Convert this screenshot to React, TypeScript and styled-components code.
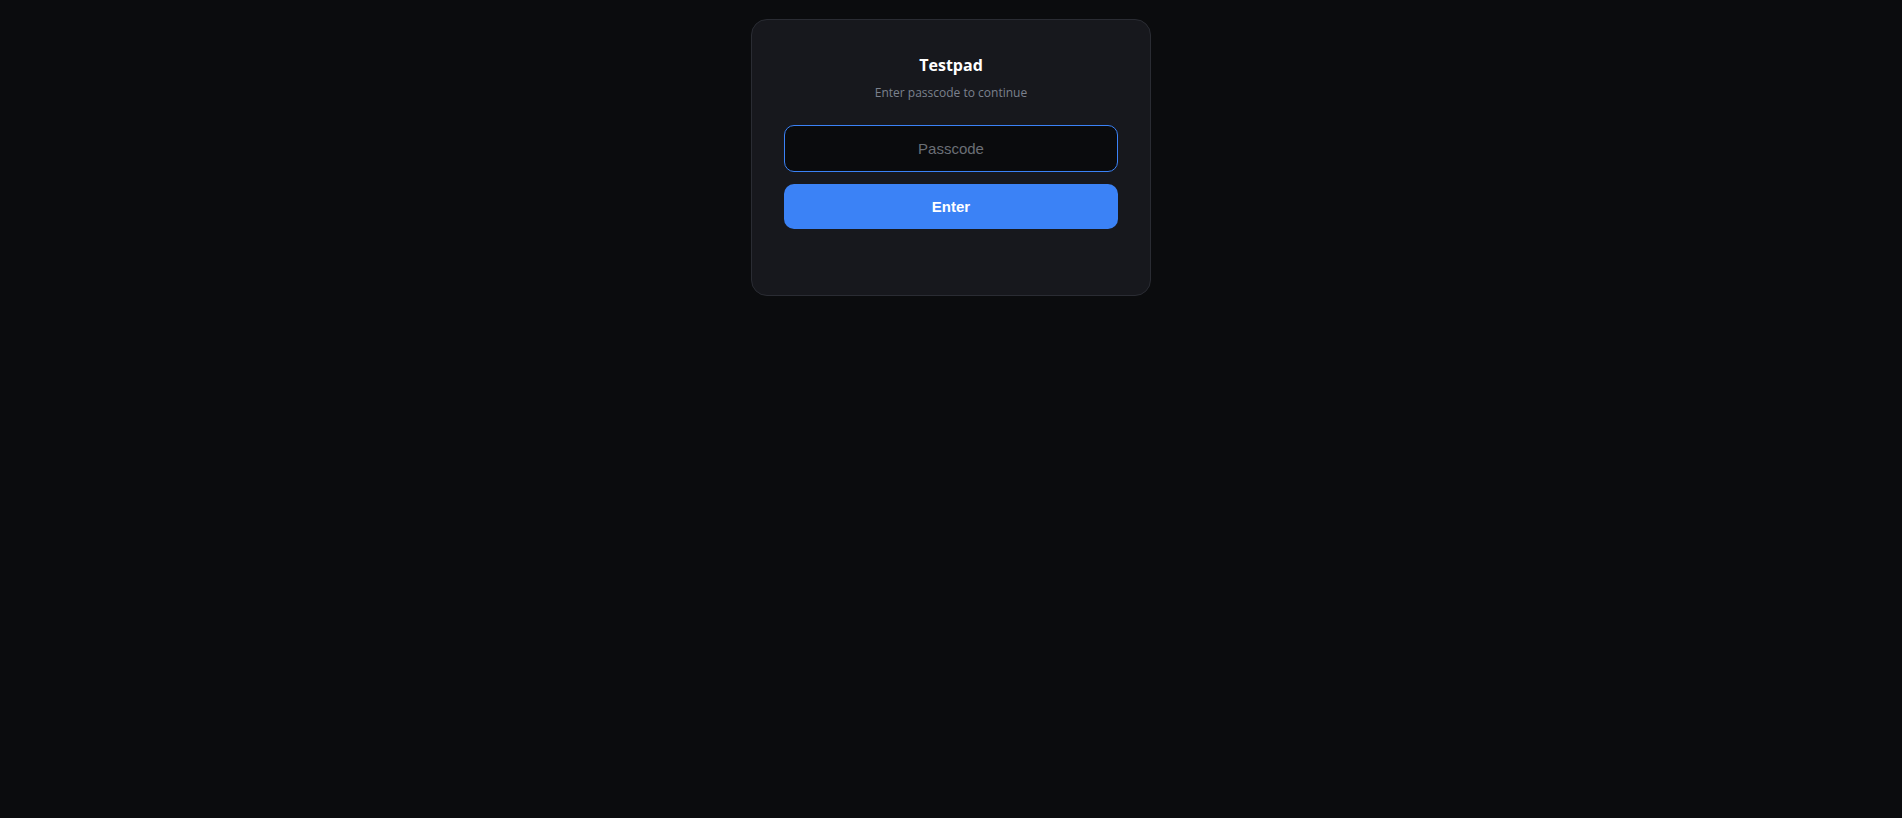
import React from "react";
import styled, { createGlobalStyle } from "styled-components";

const GlobalStyle = createGlobalStyle`
  html, body {
    margin: 0;
    padding: 0;
    background: #0b0c0e;
    height: 100%;
  }
  body {
    font-family: "Open Sans", "Noto Sans", sans-serif;
  }
`;

const Page = styled.div`
  min-height: 818px;
  display: flex;
  justify-content: center;
  align-items: flex-start;
  padding-top: 19px;
  box-sizing: border-box;
  background: #0b0c0e;
`;

const Card = styled.form`
  width: 400px;
  box-sizing: border-box;
  padding: 32px 32px 66px;
  background: #17181d;
  border: 1px solid #2a2c33;
  border-radius: 16px;
  display: flex;
  flex-direction: column;
  align-items: stretch;
`;

const Title = styled.h1`
  margin: 0;
  text-align: center;
  color: #ffffff;
  font-size: 16px;
  font-weight: 700;
  line-height: 26px;
`;

const Subtitle = styled.p`
  margin: 5px 0 22px;
  text-align: center;
  color: #7b818d;
  font-size: 12px;
  line-height: 20px;
`;

const PasscodeInput = styled.input`
  height: 47px;
  box-sizing: border-box;
  border: 1px solid #3b82f6;
  border-radius: 10px;
  background: #0a0b0d;
  color: #e5e7eb;
  text-align: center;
  font-family: "Liberation Sans", Arial, sans-serif;
  font-size: 15px;
  outline: none;

  &::placeholder {
    color: #6b6f76;
  }
`;

const SubmitButton = styled.button`
  margin-top: 12px;
  height: 45px;
  border: none;
  border-radius: 10px;
  background: #3b82f6;
  color: #ffffff;
  font-family: "Liberation Sans", Arial, sans-serif;
  font-size: 15px;
  font-weight: 700;
  cursor: pointer;
`;

export default function App() {
  return (
    <>
      <GlobalStyle />
      <Page>
        <Card onSubmit={e => e.preventDefault()}>
          <Title>Testpad</Title>
          <Subtitle>Enter passcode to continue</Subtitle>
          <PasscodeInput type="password" placeholder="Passcode" />
          <SubmitButton type="submit">Enter</SubmitButton>
        </Card>
      </Page>
    </>
  );
}
